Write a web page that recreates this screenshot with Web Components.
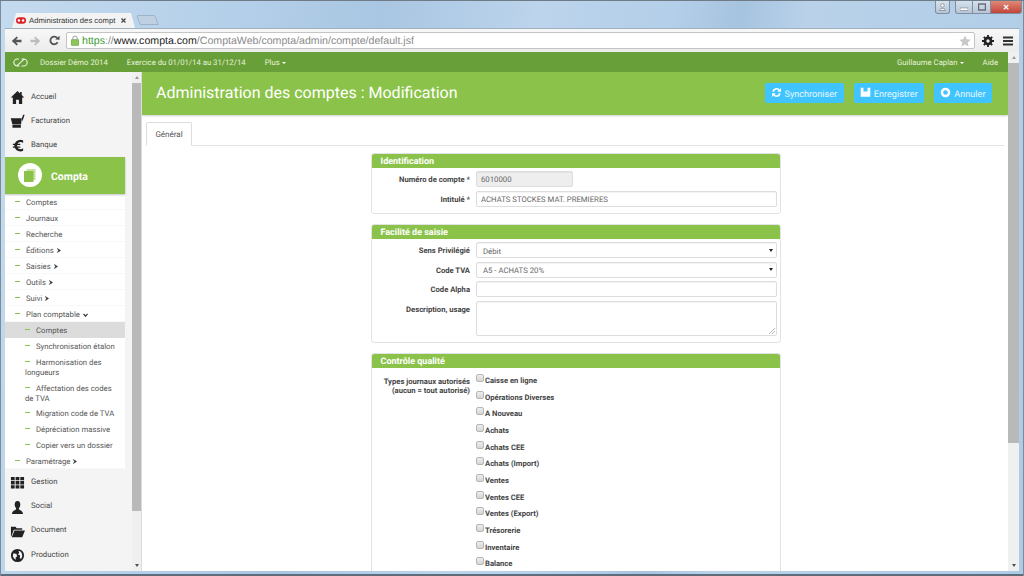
<!DOCTYPE html>
<html lang="fr">
<head>
<meta charset="utf-8">
<title>Administration des comptes</title>
<style>
    html, body { margin: 0; width: 1024px; height: 576px; overflow: hidden; }
    body { font-family: Roboto, "Liberation Sans", sans-serif; text-rendering: geometricPrecision; }
</style>
</head>
<body>
<app-window>
    <browser-chrome></browser-chrome>
    <div style="display:flex;height:519px">
        <div style="flex:1;min-width:0">
            <top-bar></top-bar>
            <div style="display:flex;height:499px;background:#fff">
                <side-nav>
                    <nav-item icon="home">Accueil</nav-item>
                    <nav-item icon="cart">Facturation</nav-item>
                    <nav-item icon="euro">Banque</nav-item>
                    <nav-active>Compta</nav-active>
                    <nav-sub>Comptes</nav-sub>
                    <nav-sub>Journaux</nav-sub>
                    <nav-sub>Recherche</nav-sub>
                    <nav-sub arrow="right">Éditions</nav-sub>
                    <nav-sub arrow="right">Saisies</nav-sub>
                    <nav-sub arrow="right">Outils</nav-sub>
                    <nav-sub arrow="right">Suivi</nav-sub>
                    <nav-sub arrow="down">Plan comptable</nav-sub>
                    <nav-sub level="2" selected>Comptes</nav-sub>
                    <nav-sub level="2">Synchronisation étalon</nav-sub>
                    <nav-sub level="2">Harmonisation des longueurs</nav-sub>
                    <nav-sub level="2" style="margin-bottom:-1px">Affectation des codes de TVA</nav-sub>
                    <nav-sub level="2">Migration code de TVA</nav-sub>
                    <nav-sub level="2">Dépréciation massive</nav-sub>
                    <nav-sub level="2">Copier vers un dossier</nav-sub>
                    <nav-sub arrow="right" style="margin-bottom:1px">Paramétrage</nav-sub>
                    <nav-item icon="grid" style="--text-shift:-1px">Gestion</nav-item>
                    <nav-item icon="user" style="--text-shift:-1px">Social</nav-item>
                    <nav-item icon="folder" style="--text-shift:-1px">Document</nav-item>
                    <nav-item icon="globe" style="--text-shift:-1px">Production</nav-item>
                </side-nav>
                <main-area>
                    <page-header>Administration des comptes : Modification</page-header>
                    <tab-strip>Général</tab-strip>
                    <form-panel heading="Identification" style="padding-bottom:6px">
                        <form-row label="Numéro de compte *"><text-field disabled style="width:97px">6010000</text-field></form-row>
                        <form-row label="Intitulé *"><text-field>ACHATS STOCKES MAT. PREMIERES</text-field></form-row>
                    </form-panel>
                    <form-panel heading="Facilité de saisie" style="margin-top:10px;padding-bottom:5.5px">
                        <form-row label="Sens Privilégié"><text-field select>Débit</text-field></form-row>
                        <form-row label="Code TVA"><text-field select>A5 - ACHATS 20%</text-field></form-row>
                        <form-row label="Code Alpha"><text-field></text-field></form-row>
                        <form-row label="Description, usage"><text-field area></text-field></form-row>
                    </form-panel>
                    <form-panel heading="Contrôle qualité" style="margin-top:10px">
                        <form-row label="Types journaux autorisés (aucun = tout autorisé)" style="--label-top:5.5px">
                            <check-list>
                                <check-row>Caisse en ligne</check-row>
                                <check-row>Opérations Diverses</check-row>
                                <check-row>A Nouveau</check-row>
                                <check-row>Achats</check-row>
                                <check-row>Achats CEE</check-row>
                                <check-row>Achats (Import)</check-row>
                                <check-row>Ventes</check-row>
                                <check-row>Ventes CEE</check-row>
                                <check-row>Ventes (Export)</check-row>
                                <check-row>Trésorerie</check-row>
                                <check-row>Inventaire</check-row>
                                <check-row>Balance</check-row>
                            </check-list>
                        </form-row>
                    </form-panel>
                </main-area>
            </div>
        </div>
        <scroll-bar thumb-top="11" thumb-height="380" style="width:11px"></scroll-bar>
    </div>
</app-window>

<script>
const ICONS = {
    home: '<path d="M8 1 L.8 8 H3 V15 H6.5 V10.5 H9.5 V15 H13 V8 H15.2 L12.5 5.4 V2 H10.8 V3.7 Z"/>',
    cart: '<path d="M.8 4.6 H12.6 L11.8 11.2 H2.6 Z M2.6 11.8 H11.6 V14.6 H2.6 Z M12.7 4.6 L14 .8 H15.6 L13.2 8 Z"/>',
    euro: '<path d="M14 2.6 A6.6 6.6 0 0 0 5 6 H3 V7.5 H4.6 V9 H3 V10.5 H5 A6.6 6.6 0 0 0 14 13.6 V10.9 A4 4 0 0 1 8 10.5 H11 V9 H7.6 V7.5 H11 V6 H8 A4 4 0 0 1 14 5.3 Z"/>',
    grid: '<path d="M1 2 H5 V5.6 H1 Z M6 2 H10 V5.6 H6 Z M11 2 H15 V5.6 H11 Z M1 6.5 H5 V10 H1 Z M6 6.5 H10 V10 H6 Z M11 6.5 H15 V10 H11 Z M1 11 H5 V14.5 H1 Z M6 11 H10 V14.5 H6 Z M11 11 H15 V14.5 H11 Z"/>',
    user: '<path d="M8 1 C5.8 1 5 2.8 5 4.8 C5 6.6 5.8 8 6.5 8.8 V10 C4.5 11 2.5 11.5 2 15 H14 C13.5 11.5 11.5 11 9.5 10 V8.8 C10.2 8 11 6.6 11 4.8 C11 2.8 10.2 1 8 1 Z"/>',
    folder: '<path d="M1 3 H6 L7 4.5 H13 V6 H4 L1.5 13 H1 Z M4.8 7 H16 L13 14 H1.8 Z"/>',
    globe: '<path fill-rule="evenodd" d="M8 1 A7 7 0 1 0 8 15 A7 7 0 1 0 8 1 Z M9 3 C11.5 3.4 13 5.4 13 8 C13 9.4 12.5 10.7 11.6 11.6 L10.4 10.4 L10.8 8 L8.5 7 L9.8 5 Z M4 5.5 L7 6.5 L7.5 9 L6 10 L6.2 12.6 C4.5 11.8 3 10 3 8 C3 7 3.4 6.2 4 5.5 Z"/>'
};

// base for the small shadow DOM elements of this page
class ShadowBase extends HTMLElement {
    render(html) {
        if (!this.shadowRoot) this.attachShadow({ mode: 'open' });
        this.shadowRoot.innerHTML = html;
    }
}

class AppWindow extends ShadowBase {
    connectedCallback() {
        this.render(`
            <style>
                :host { display: block; width: 1024px; height: 576px; box-sizing: border-box; overflow: hidden;
                    padding: 0 5px; border-top: 1px solid #6f7c88; box-shadow: inset 1px 0 0 #7d8b98, inset -1px 0 0 #7d8b98, inset 0 -2px 0 #5f6d7a;
                    background: linear-gradient(100deg, #c4daee 0, #b3cfe9 22%, #a9c6e2 34%, #bcd4ec 48%, #b4cfe9 60%, #a6c3df 66%, #b9d2ea 72%, #aecbe6 100%); }
            </style>
            <slot></slot>`);
    }
}

class BrowserChrome extends ShadowBase {
    connectedCallback() {
        this.render(`
            <style>
                :host { display: block; }
                .strip { height: 27px; display: flex; align-items: flex-end; padding-left: 7px; position: relative; }
                .tab { width: 123px; height: 15px; box-sizing: border-box; display: flex; align-items: center; gap: 3px;
                    padding: 0 0 0 4px; background: #f3f3f3; color: #333; font: 7.7px "Liberation Sans", sans-serif;
                    clip-path: polygon(0 100%, 4px 0, 119px 0, 100% 100%); white-space: nowrap; }
                .tab svg { flex: none; }
                .tab .x { margin: 0 9px 0 auto; }
                .new { width: 17px; height: 8px; margin: 0 0 3px 3px; background: #bfd0e2; border: 1px solid #9db3c9;
                    transform: skewX(20deg); border-radius: 2px 2px 0 0; }
                .caption { position: absolute; top: 0; right: -3px; display: flex; align-items: flex-start; gap: 5px; }
                .cb { height: 13px; box-sizing: border-box; border: 1px solid #7f8e9c; border-top: 0; border-radius: 0 0 3px 3px;
                    background: linear-gradient(#d5e1ec, #b5c6d6); display: flex; align-items: center; justify-content: center; }
                .close { background: linear-gradient(#e08a78, #c2443a); color: #fff; font: bold 8px "Liberation Sans", sans-serif; }
                .bar { height: 24px; box-sizing: border-box; display: flex; align-items: center; background: linear-gradient(#f7f7f7, #ececec);
                    border-top: 1px solid #9fb0c0; padding: 0 6px; gap: 8px; }
                .bar svg { flex: none; display: block; }
                .url { flex: 1; height: 17px; box-sizing: border-box; margin: 0 -1px 0 -2px; background: #fff; border: 1px solid #c4c4c4; border-radius: 2px;
                    display: flex; align-items: center; padding: 0 3px 0 4px; gap: 3px; font: 10.6px "Liberation Sans", sans-serif; color: #8a8a8a; white-space: nowrap; }
                .url .https { color: #3a9a32; }
                .url .host { color: #222; }
                .url .path { flex: 1; }
            </style>
            <div class="strip">
                <div class="tab">
                    <svg width="10" height="7" viewBox="0 0 11 7"><rect width="11" height="7" rx="3.5" fill="#d8232a"/><circle cx="3.2" cy="3.5" r="1.4" fill="#fff"/><circle cx="7.8" cy="3.5" r="1.4" fill="#fff"/></svg>
                    <span>Administration des compt</span>
                    <svg class="x" width="5" height="5" viewBox="0 0 5 5"><path d="M.5 .5 L4.5 4.5 M4.5 .5 L.5 4.5" stroke="#444" stroke-width="1.2"/></svg>
                </div>
                <div class="new"></div>
                <div class="caption">
                    <div class="cb" style="width:15px"><svg width="7" height="8" viewBox="0 0 7 8"><circle cx="3.5" cy="2.4" r="1.7" fill="#fff" stroke="#667" stroke-width=".6"/><path d="M.5 7.5 C.5 5 6.5 5 6.5 7.5Z" fill="#fff" stroke="#667" stroke-width=".6"/></svg></div>
                    <div style="display:flex">
                        <div class="cb" style="width:18px;border-radius:0 0 0 3px"><svg width="8" height="8" viewBox="0 0 8 8"><rect y="5" width="8" height="2.4" fill="#fff" stroke="#667" stroke-width=".5"/></svg></div>
                        <div class="cb" style="width:18px;border-radius:0;border-left:0"><svg width="8" height="8" viewBox="0 0 8 8"><rect x=".5" y="1" width="7" height="6" fill="none" stroke="#667" stroke-width="1.4"/></svg></div>
                        <div class="cb close" style="width:31px;border-radius:0 0 3px 0;border-left:0">✕</div>
                    </div>
                </div>
            </div>
            <div class="bar">
                <svg width="11" height="10" viewBox="0 0 11 10"><path d="M10.5 3.8 H5 L6.9 1.4 L5.7 .4 L.8 5 L5.7 9.6 L6.9 8.6 L5 6.2 H10.5 Z" fill="#555"/></svg>
                <svg width="11" height="10" viewBox="0 0 11 10"><path d="M.5 3.8 H6 L4.1 1.4 L5.3 .4 L10.2 5 L5.3 9.6 L4.1 8.6 L6 6.2 H.5 Z" fill="#bcbcbc"/></svg>
                <svg width="11" height="11" viewBox="0 0 12 11"><path d="M9.4 7.4 A4.2 4.2 0 1 1 9.2 3.1" fill="none" stroke="#555" stroke-width="2"/><path d="M6.8 4.4 L11.5 4.6 L11.5 .2 Z" fill="#555"/></svg>
                <div class="url">
                    <svg width="8" height="11" viewBox="0 0 9 11"><rect y="4.5" width="9" height="6.5" rx="1" fill="#8fc65a" stroke="#5d9a33" stroke-width=".6"/><path d="M2 4.5 V3 A2.5 2.5 0 0 1 7 3 V4.5" fill="none" stroke="#999" stroke-width="1.1"/></svg>
                    <div class="path"><span class="https">https</span>://<span class="host">www.compta.com</span>/ComptaWeb/compta/admin/compte/default.jsf</div>
                    <svg width="12" height="12" viewBox="0 0 24 24"><path d="M12 1 L15.4 8.4 L23.4 9.3 L17.5 14.8 L19.1 22.8 L12 18.8 L4.9 22.8 L6.5 14.8 L.6 9.3 L8.6 8.4 Z" fill="#c8c8c8"/></svg>
                </div>
                <svg width="12" height="12" viewBox="0 0 12 12"><circle cx="6" cy="6" r="3.2" fill="none" stroke="#222" stroke-width="2.4"/><path d="M6 0 V12 M0 6 H12 M1.8 1.8 L10.2 10.2 M10.2 1.8 L1.8 10.2" stroke="#222" stroke-width="1.8"/><circle cx="6" cy="6" r="1.7" fill="#f1f1f1"/></svg>
                <svg width="10" height="10" viewBox="0 0 10 10" style="margin-left:1px"><path d="M0 1.5 H10 M0 5 H10 M0 8.5 H10" stroke="#333" stroke-width="1.8"/></svg>
            </div>`);
    }
}

class TopBar extends ShadowBase {
    connectedCallback() {
        this.render(`
            <style>
                :host { display: flex; height: 20px; align-items: center; background: #689f38; color: #e8f3dc;
                    font: 7.75px Roboto, sans-serif; white-space: nowrap; padding-left: 7.5px; }
                svg { flex: none; }
                .c { display: inline-block; border: 2.4px solid transparent; border-top-color: #fff; border-bottom: 0; margin-left: 2px; vertical-align: 1px; }
                .grow { flex: 1; }
            </style>
            <svg width="15" height="9" viewBox="0 0 15 9"><path d="M6.5 8 H4.4 C2.4 8 .8 6.4 .8 4.5 C.8 2.6 2.4 1 4.4 1 H6 M8.5 8 H10.6 C12.6 8 14.2 6.4 14.2 4.5 C14.2 2.6 12.6 1 10.6 1 H8.5 M11 1.4 L4 7.6" fill="none" stroke="#eef5e6" stroke-width="1.1"/></svg>
            <span style="margin-left:12.5px">Dossier Démo 2014</span>
            <span style="margin-left:19px">Exercice du 01/01/14 au 31/12/14</span>
            <span style="margin-left:19px">Plus<i class="c"></i></span>
            <span class="grow"></span>
            <span>Guillaume Caplan<i class="c"></i></span>
            <span style="margin:0 10px 0 19px">Aide</span>`);
    }
}

class ScrollBar extends ShadowBase {
    connectedCallback() {
        const top = this.getAttribute('thumb-top');
        const h = this.getAttribute('thumb-height');
        this.render(`
            <style>
                :host { display: block; flex: none; background: #f0f0f0; position: relative; }
                .t { position: absolute; left: 0; right: 0; background: #b9b9b9; top: ${top}px; height: ${h}px; }
                .u, .d { position: absolute; left: 50%; margin-left: -2px; border: 2px solid transparent; }
                .u { top: 4px; border-bottom: 3px solid #999; border-top: 0; }
                .d { bottom: 4px; border-top: 3px solid #505050; border-bottom: 0; }
            </style>
            <div class="u"></div><div class="t"></div><div class="d"></div>`);
    }
}

class SideNav extends ShadowBase {
    connectedCallback() {
        this.render(`
            <style>
                :host { display: flex; flex: none; width: 137px; background: #f4f4f4; border-right: 1px solid #dcdcdc; box-sizing: border-box; overflow: hidden; }
                .col { width: 120px; flex: none; padding-top: 12px; }
                scroll-bar { width: 9px; margin-left: 7px; }
            </style>
            <div class="col"><slot></slot></div>
            <scroll-bar thumb-top="10.5" thumb-height="428"></scroll-bar>`);
    }
}

class NavItem extends ShadowBase {
    connectedCallback() {
        this.render(`
            <style>
                :host { display: flex; height: 24.2px; align-items: center; padding-left: 5px; color: #444; font: 7.75px Roboto, sans-serif; }
                svg { width: 15px; height: 15px; fill: #222; flex: none; margin-right: 6px; margin-top: 2px; }
                span { margin-top: var(--text-shift, 1px); }
            </style>
            <svg viewBox="0 0 16 16">${ICONS[this.getAttribute('icon')]}</svg><span><slot></slot></span>`);
    }
}

class NavActive extends ShadowBase {
    connectedCallback() {
        this.render(`
            <style>
                :host { display: flex; height: 37px; align-items: center; padding-left: 13px; margin-top: .4px; background: #8bc34a; color: #fff;
                    font: bold 10.5px Roboto, sans-serif; box-shadow: 0 1px 2px rgba(0,0,0,.25); position: relative; }
                .c { width: 24px; height: 24px; border-radius: 50%; background: #fff; display: flex; align-items: center; justify-content: center; margin-right: 9px; }
                span { margin-top: 1.5px; }
            </style>
            <div class="c"><svg width="12" height="13" viewBox="0 0 12 13"><rect x="2.5" y="0" width="9" height="11" fill="#c6e29e"/><rect x="0" y="2" width="9.5" height="11" fill="#8bc34a"/></svg></div>
            <span><slot></slot></span>`);
    }
}

class NavSub extends ShadowBase {
    connectedCallback() {
        const arrow = this.getAttribute('arrow');
        const glyph = arrow === 'right'
            ? '<svg width="4" height="5" viewBox="0 0 5 6"><path d="M.5 .5 L4.5 3 L.5 5.5 L1.8 3 Z" fill="#333" stroke="#333" stroke-width=".6"/></svg>'
            : arrow === 'down'
                ? '<svg width="5" height="4" viewBox="0 0 6 5"><path d="M.5 1 L3 4 L5.5 1" fill="none" stroke="#333" stroke-width="1.5"/></svg>'
                : '';
        this.render(`
            <style>
                :host { display: block; background: #fff; color: #555; font: 7.75px/10px Roboto, sans-serif; box-sizing: border-box;
                    padding: 4px 4px 1px 10px; border-bottom: 1px solid #f8f8f8; }
                :host([level="2"]) { padding: 3.8px 4px 2.2px 20px; border-bottom: 0; }
                :host([selected]) { background: #dcdcdc; }
                i { display: inline-block; width: 5px; height: 1px; background: #8bc34a; vertical-align: 3px; margin-right: 6px; }
                svg { margin-left: 1px; }
            </style>
            <i></i><slot></slot> ${glyph}`);
    }
}

class MainArea extends ShadowBase {
    connectedCallback() {
        this.render(`
            <style>
                :host { display: flex; flex-direction: column; flex: 1; min-width: 0; overflow: hidden; background: #fff; }
            </style>
            <slot></slot>`);
    }
}

class ActionButton extends ShadowBase {
    connectedCallback() {
        this.render(`
            <style>
                :host { display: flex; flex: none; align-items: center; height: 20px; box-sizing: border-box; padding: 3px 6.5px 0 6px; gap: 3px; background: #40c4ff; color: #e8f8ff;
                    border-radius: 2px; font: 9.15px Roboto, sans-serif; }
            </style>
            <slot name="icon"></slot><slot></slot>`);
    }
}

class PageHeader extends ShadowBase {
    connectedCallback() {
        this.render(`
            <style>
                :host { display: flex; flex: none; height: 43px; box-sizing: border-box; align-items: center; background: #8bc34a; padding: 0 16px 2px 14px;
                    box-shadow: 0 1px 2px rgba(0,0,0,.2); color: #fff; font: 16px Roboto, sans-serif; }
                h1 { font: inherit; margin: 0; flex: 1; }
                .btns { display: flex; gap: 10px; margin-top: 1px; }
                svg { width: 11px; height: 11px; fill: #fff; display: block; margin-top: -4px; }
            </style>
            <h1><slot></slot></h1>
            <div class="btns">
                <action-button><svg slot="icon" viewBox="0 0 16 16"><path d="M2 7 A6 6 0 0 1 12.5 3.5 L14.5 1.5 V7 H9 L11 5 A3.8 3.8 0 0 0 4.5 7 Z M14 9 A6 6 0 0 1 3.5 12.5 L1.5 14.5 V9 H7 L5 11 A3.8 3.8 0 0 0 11.5 9 Z"/></svg>Synchroniser</action-button>
                <action-button><svg slot="icon" viewBox="0 0 16 16"><path d="M1 1 H5 V6.5 H11 V1 H15 V14 H1 Z"/></svg>Enregistrer</action-button>
                <action-button><svg slot="icon" viewBox="0 0 16 16"><path fill-rule="evenodd" d="M8 1 A7 7 0 1 0 8 15 A7 7 0 1 0 8 1 Z M8 4.6 A3.4 3.4 0 1 1 8 11.4 A3.4 3.4 0 1 1 8 4.6 Z"/></svg>Annuler</action-button>
            </div>`);
    }
}

class TabStrip extends ShadowBase {
    connectedCallback() {
        this.render(`
            <style>
                :host { display: block; flex: none; margin: 7px 4px 6.5px; height: 24px; box-sizing: border-box; border-bottom: 1px solid #e4e4e4; }
                div { display: flex; align-items: center; justify-content: center; width: 46px; height: 24px; box-sizing: border-box; background: #fff;
                    border: 1px solid #ddd; border-bottom-color: #fff; border-radius: 2px 2px 0 0; color: #555; font: 8px Roboto, sans-serif; }
            </style>
            <div><slot></slot></div>`);
    }
}

class FormPanel extends ShadowBase {
    connectedCallback() {
        this.render(`
            <style>
                :host { display: block; flex: none; width: 410px; box-sizing: border-box; margin: 0 auto; position: relative; left: 0.5px; border: 1px solid #e3e3e3; border-radius: 3px; background: #fff; }
                h2 { margin: 0; height: 14px; padding: 0 9px; background: #8bc34a; color: #fff; font: bold 9px/16px Roboto, sans-serif; border-radius: 2px 2px 0 0; }
            </style>
            <h2>${this.getAttribute('heading')}</h2>
            <slot></slot>`);
    }
}

class FormRow extends ShadowBase {
    connectedCallback() {
        this.render(`
            <style>
                :host { display: flex; margin-top: 3.5px; }
                label { flex: none; width: 98.5px; padding-top: var(--label-top, 4px); text-align: right; color: #444; font: bold 7.65px/9.5px Roboto, sans-serif; }
                .f { flex: 1; min-width: 0; margin: 0 3px 0 6px; display: flex; }
            </style>
            <label>${this.getAttribute('label')}</label>
            <div class="f"><slot></slot></div>`);
    }
}

class TextField extends ShadowBase {
    connectedCallback() {
        const select = this.hasAttribute('select');
        this.render(`
            <style>
                :host { display: flex; flex: 1; align-items: center; height: 16px; box-sizing: border-box; padding: 1px 4px 0; background: #fff; position: relative;
                    border: 1px solid #ddd; border-radius: 2px; box-shadow: inset 0 1px 1px rgba(0,0,0,.05); color: #666; font: 7.75px Roboto, sans-serif; white-space: nowrap; }
                :host([disabled]) { flex: none; background: #eee; }
                :host([area]) { height: 35.5px; }
                :host([select]) { padding-left: 6px; padding-top: 2px; }
                .s { position: absolute; right: 3px; top: 5.5px; border: 2.2px solid transparent; border-top: 3.4px solid #222; border-bottom: 0; }
                svg { position: absolute; right: 1px; bottom: 1px; }
            </style>
            <slot></slot>
            ${select ? '<i class="s"></i>' : ''}
            ${this.hasAttribute('area') ? '<svg width="6" height="6" viewBox="0 0 6 6"><path d="M0 6 L6 0 M3 6 L6 3" stroke="#999" stroke-width=".7"/></svg>' : ''}`);
    }
}

class CheckList extends ShadowBase {
    connectedCallback() {
        this.render(`<style>:host { display: block; padding-top: 3.2px; }</style><slot></slot>`);
    }
}

class CheckRow extends ShadowBase {
    connectedCallback() {
        this.render(`
            <style>
                :host { display: flex; height: 16.65px; align-items: flex-start; color: #444; font: bold 7.65px/10px Roboto, sans-serif; white-space: nowrap; }
                i { flex: none; width: 6px; height: 6px; margin-right: 1px; border: 1px solid #b5b5b5; border-radius: 2px; background: linear-gradient(#eee, #d5d5d5); }
                span { margin-top: 2px; }
            </style>
            <i></i><span><slot></slot></span>`);
    }
}

customElements.define('app-window', AppWindow);
customElements.define('browser-chrome', BrowserChrome);
customElements.define('top-bar', TopBar);
customElements.define('scroll-bar', ScrollBar);
customElements.define('side-nav', SideNav);
customElements.define('nav-item', NavItem);
customElements.define('nav-active', NavActive);
customElements.define('nav-sub', NavSub);
customElements.define('main-area', MainArea);
customElements.define('action-button', ActionButton);
customElements.define('page-header', PageHeader);
customElements.define('tab-strip', TabStrip);
customElements.define('form-panel', FormPanel);
customElements.define('form-row', FormRow);
customElements.define('text-field', TextField);
customElements.define('check-list', CheckList);
customElements.define('check-row', CheckRow);
</script>
</body>
</html>
